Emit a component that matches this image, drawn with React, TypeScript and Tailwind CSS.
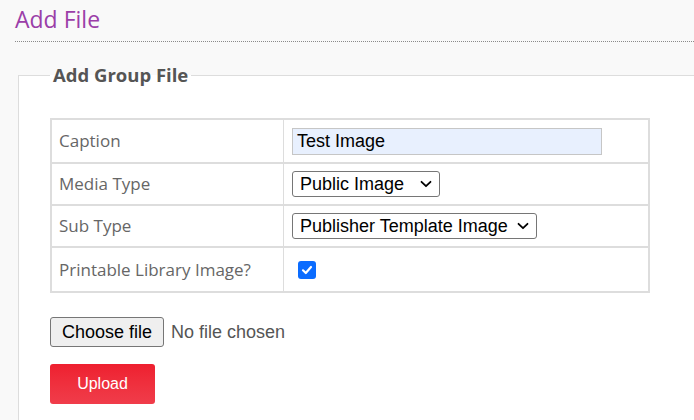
import React from "react";

const Chevron = () => (
  <svg width="14" height="14" viewBox="0 0 14 14" className="shrink-0">
    <path d="M2.5 4.8 L7 9.2 L11.5 4.8" fill="none" stroke="#000" strokeWidth="1.8" strokeLinecap="round" strokeLinejoin="round" />
  </svg>
);

export default function App() {
  const label = "pl-[7px] text-[17px] text-[#666] font-['Open_Sans',sans-serif]";
  return (
    <div className="w-[694px] h-[420px] overflow-hidden bg-[#f9f9f9] font-['Liberation_Sans',Arial,sans-serif]">
      <div className="ml-[15px] pt-[2px] h-[42px] border-b border-dotted border-[#8a8a8a]">
        <h1 className="text-[23px] leading-[34px] text-[#9b3ea8] font-['Open_Sans',sans-serif] font-normal">Add File</h1>
      </div>
      <div className="bg-[#f9f9f9] pt-[21px]">
        <fieldset className="ml-[18px] w-[700px] h-[400px] border border-[#ddd] bg-white pl-[31px]">
          <legend className="px-[3px] text-[18.5px] font-bold text-[#555] font-['Open_Sans',sans-serif] leading-[24px]">Add Group File</legend>
          <div className="mt-[31px] w-[600px] border-2 border-[#ddd]">
            <div className="flex h-[44px] border-b-2 border-[#ddd]">
              <div className={`w-[232px] border-r border-[#ddd] flex items-center ${label}`}>Caption</div>
              <div className="flex-1 flex items-center pl-[8px]">
                <div className="w-[310px] h-[27px] bg-[#e8f0fe] border border-[#c6c6c6] flex items-center pl-[4px] text-[18px] text-black">Test Image</div>
              </div>
            </div>
            <div className="flex h-[42px] border-b-2 border-[#ddd]">
              <div className={`w-[232px] border-r border-[#ddd] flex items-center ${label}`}>Media Type</div>
              <div className="flex-1 flex items-center pl-[8px]">
                <div className="w-[148px] h-[26px] border border-[#767676] rounded-[3px] flex items-center justify-between pl-[7px] pr-[6px] text-[18px] text-black">
                  <span>Public Image</span>
                  <Chevron />
                </div>
              </div>
            </div>
            <div className="flex h-[42px] border-b-2 border-[#ddd]">
              <div className={`w-[232px] border-r border-[#ddd] flex items-center ${label}`}>Sub Type</div>
              <div className="flex-1 flex items-center pl-[8px]">
                <div className="w-[245px] h-[26px] border border-[#767676] rounded-[3px] flex items-center justify-between pl-[7px] pr-[6px] text-[18px] text-black">
                  <span>Publisher Template Image</span>
                  <Chevron />
                </div>
              </div>
            </div>
            <div className="flex h-[43px]">
              <div className={`w-[232px] border-r border-[#ddd] flex items-center ${label}`}>Printable Library Image?</div>
              <div className="flex-1 flex items-center pl-[14px]">
                <div className="w-[18px] h-[18px] rounded-[3px] bg-[#0b6cff] flex items-center justify-center">
                  <svg width="12" height="12" viewBox="0 0 12 12">
                    <path d="M2 6.3 L4.8 9 L10 3" fill="none" stroke="#fff" strokeWidth="2.2" strokeLinecap="round" strokeLinejoin="round" />
                  </svg>
                </div>
              </div>
            </div>
          </div>
          <div className="mt-[24px] flex items-center gap-[7px]">
            <div className="w-[114px] h-[30px] bg-[#efefef] border border-[#767676] rounded-[3px] flex items-center justify-center text-[18px] text-black">Choose file</div>
            <span className="text-[18px] text-[#555]">No file chosen</span>
          </div>
          <div className="mt-[17px] w-[105px] h-[40px] rounded-[3px] bg-gradient-to-b from-[#ee1f2f] to-[#f03c4a] flex items-center justify-center text-[16px] text-white">Upload</div>
        </fieldset>
      </div>
    </div>
  );
}
